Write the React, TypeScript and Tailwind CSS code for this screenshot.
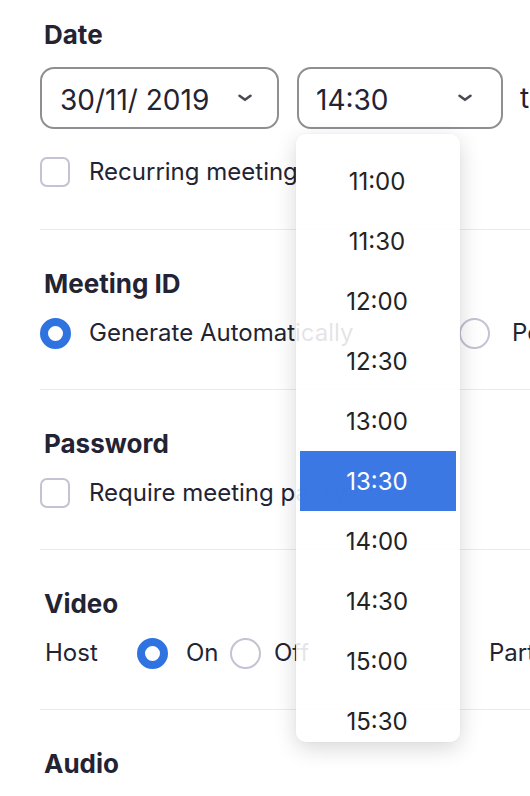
const times = ["11:00", "11:30", "12:00", "12:30", "13:00", "13:30", "14:00", "14:30", "15:00", "15:30", "16:00"];

function Chevron() {
  return (
    <svg width="16" height="10" viewBox="0 0 16 10" fill="none" aria-hidden="true">
      <path d="M2.5 2.8 L8 6.8 L13.5 2.8" stroke="#4a4a52" strokeWidth="2.6" strokeLinecap="round" strokeLinejoin="round" />
    </svg>
  );
}

function Checkbox({ label }: { label: string }) {
  return (
    <div className="flex h-[32px] items-center">
      <span className="size-[30px] shrink-0 rounded-[7px] border-[2px] border-[#c4c2d3] bg-white" />
      <span className="ml-[19px] whitespace-nowrap">{label}</span>
    </div>
  );
}

function Radio({ checked }: { checked?: boolean }) {
  return checked ? (
    <span className="size-[31px] shrink-0 rounded-full border-[8px] border-[#2f73e1] bg-white" />
  ) : (
    <span className="size-[31px] shrink-0 rounded-full border-[2px] border-[#c4c2d3] bg-white" />
  );
}

function Heading({ children }: { children: string }) {
  return <h2 className="text-[26px] font-bold leading-[30px]">{children}</h2>;
}

export default function App() {
  return (
    <div className="relative h-[796px] w-[530px] overflow-hidden bg-white font-['Inter','Noto_Sans',sans-serif] text-[24px] text-[#232333]">
      <div className="w-[900px] pl-[40px]">
        {/* Date */}
        <section className="pb-[41px] pt-[20px]">
          <div className="pl-[4px]">
            <Heading>Date</Heading>
          </div>
          <div className="mt-[17px] flex items-center">
            <div className="flex h-[62px] w-[239px] items-center justify-between rounded-[14px] border-[2px] border-[#8e8e93] pl-[18px] pr-[24px] text-[28px]">
              <span className="pt-[3px]">30/11/ 2019</span>
              <Chevron />
            </div>
            <div className="ml-[18px] flex h-[62px] w-[206px] items-center justify-between rounded-[14px] border-[2px] border-[#8e8e93] pl-[17px] pr-[28px] text-[28px]">
              <span className="pt-[3px]">14:30</span>
              <Chevron />
            </div>
            <span className="ml-[17px] text-[28px]">to</span>
          </div>
          <div className="mt-[27px]">
            <Checkbox label="Recurring meeting" />
          </div>
        </section>

        {/* Meeting ID */}
        <section className="border-t border-[#ebebf0] pb-[40px] pt-[39px]">
          <div className="pl-[4px]">
            <Heading>Meeting ID</Heading>
          </div>
          <div className="mt-[18px] flex h-[32px] items-center">
            <Radio checked />
            <span className="ml-[18px] w-[370px] whitespace-nowrap">Generate Automatically</span>
            <Radio />
            <span className="ml-[22px] whitespace-nowrap">Personal Meeting ID</span>
          </div>
        </section>

        {/* Password */}
        <section className="border-t border-[#ebebf0] pb-[40px] pt-[39px]">
          <div className="pl-[4px]">
            <Heading>Password</Heading>
          </div>
          <div className="mt-[18px]">
            <Checkbox label="Require meeting password" />
          </div>
        </section>

        {/* Video */}
        <section className="border-t border-[#ebebf0] pb-[40px] pt-[39px]">
          <div className="pl-[4px]">
            <Heading>Video</Heading>
          </div>
          <div className="mt-[18px] flex h-[32px] items-center pl-[5px]">
            <span className="w-[92px]">Host</span>
            <Radio checked />
            <span className="ml-[18px] w-[44px]">On</span>
            <Radio />
            <span className="ml-[13px] w-[215px]">Off</span>
            <span className="whitespace-nowrap">Participants</span>
          </div>
        </section>

        {/* Audio */}
        <section className="border-t border-[#ebebf0] pb-[40px] pt-[39px]">
          <div className="pl-[4px]">
            <Heading>Audio</Heading>
          </div>
        </section>
      </div>

      {/* time dropdown */}
      <div className="absolute left-[296px] top-[134px] h-[608px] w-[164px] overflow-hidden rounded-[10px] bg-white/[0.88] shadow-[0_6px_22px_rgba(0,0,0,0.16),0_0_2px_rgba(0,0,0,0.06)]">
        <ul className="px-[4px] pt-[17px]">
          {times.map((t) => (
            <li
              key={t}
              className={
                t === "13:30"
                  ? "flex h-[60px] items-center justify-center bg-[#3373e2]/[0.96] pr-[2px] pt-[2px] text-[24px] text-white"
                  : "flex h-[60px] items-center justify-center pr-[2px] pt-[2px] text-[24px] text-[#232323]"
              }
            >
              {t}
            </li>
          ))}
        </ul>
      </div>
    </div>
  );
}
